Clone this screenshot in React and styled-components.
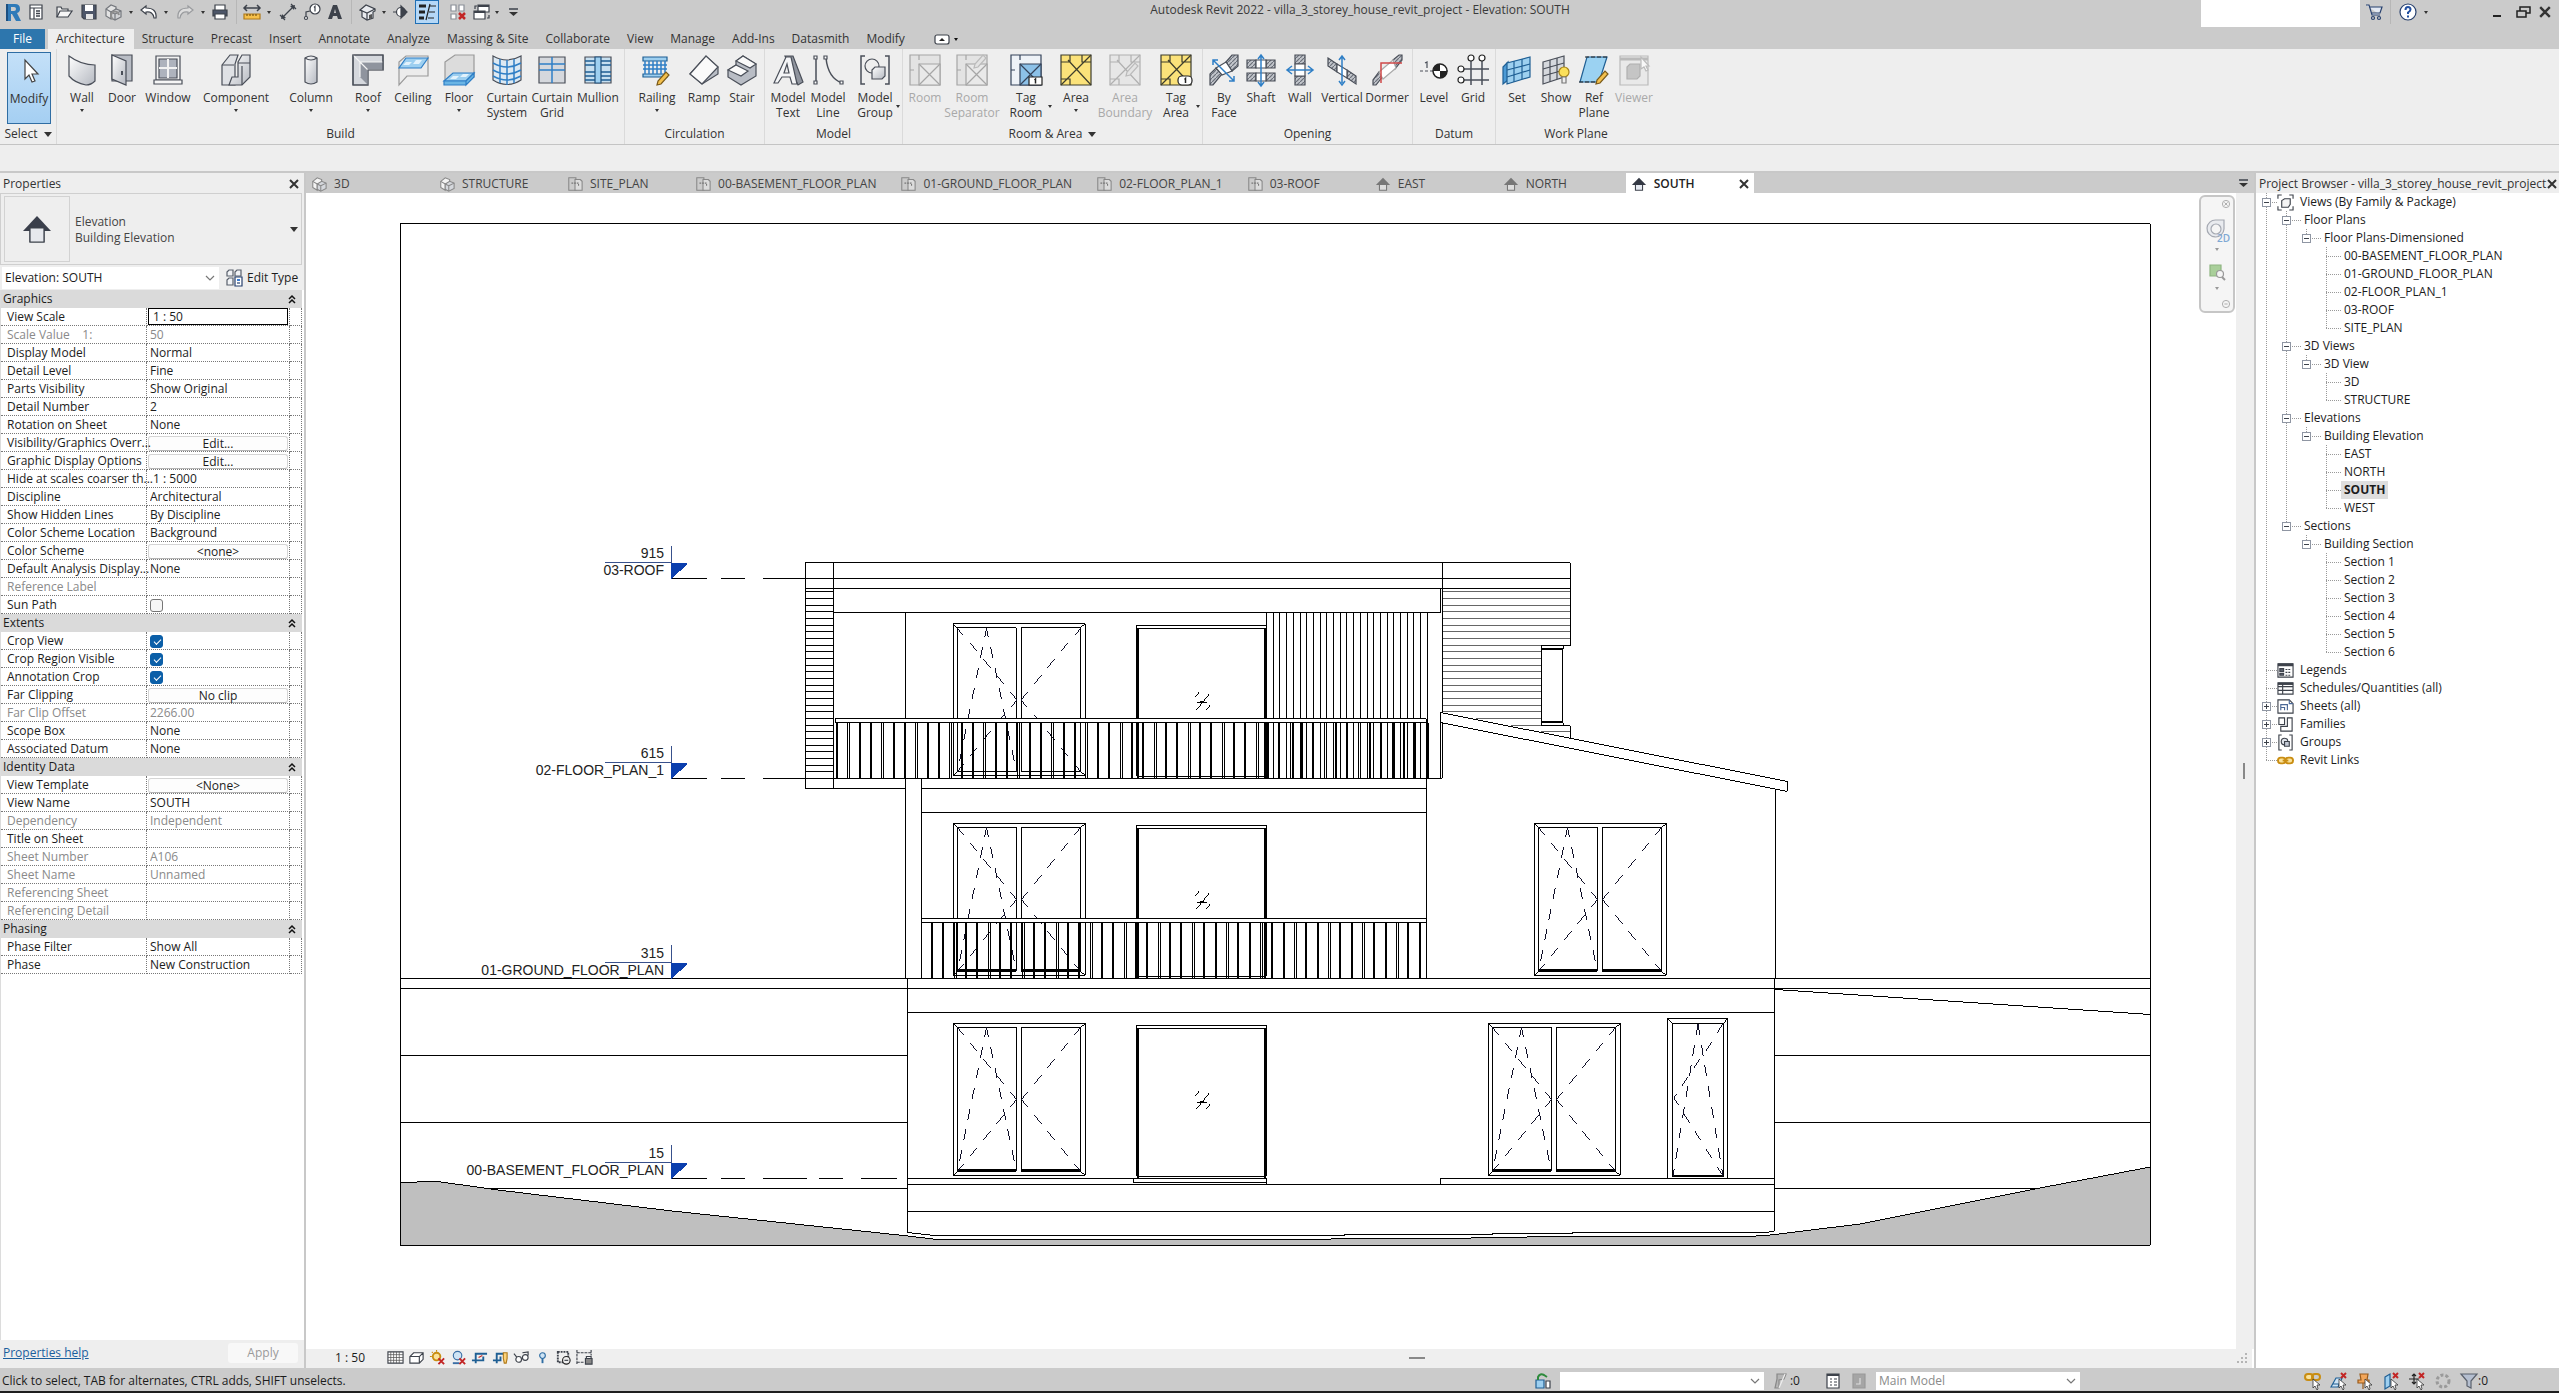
import styled, { createGlobalStyle } from "styled-components"

const GlobalStyle = createGlobalStyle`
    * {
        box-sizing: border-box;
    }
    body {
        margin: 0;
        background: #cbcbcb;
        color: #1c1c1c;
        font-family: "Open Sans", "Noto Sans", sans-serif;
        font-size: 12px;
        line-height: 16px;
    }
    button, input, select {
        font: inherit;
        color: inherit;
        margin: 0;
        padding: 0;
        border: 0;
        border-radius: 0;
        background: none;
    }
    svg {
        display: block;
        flex-shrink: 0;
        overflow: visible;
    }
`

const Page = styled.div`
    display: flex;
    flex-direction: column;
    height: 100vh;
    min-height: 1100px;
    border-bottom: 2px solid #1e1e1e;
`

/* title bar */
const TitleBar = styled.header`
    display: flex;
    align-items: center;
    height: 29px;
    background: #cbcbcb;
`
const QuickAccess = styled.div`
    display: flex;
    height: 24px;
    align-self: flex-start;
`
const ToolSlot = styled.button`
    display: flex;
    align-items: center;
    justify-content: center;
    flex: 0 0 ${({ $w }) => $w}px;
    width: ${({ $w }) => $w}px;
    height: 24px;
    background: ${({ $active }) => ($active ? "#b5d8f7" : "none")};
    box-shadow: ${({ $active }) => ($active ? "inset 0 0 0 1px #1f6fb5" : "none")};
    opacity: ${({ $dim }) => ($dim ? 0.35 : 1)};
`
const Separator = styled.span`
    flex: 0 0 1px;
    height: 24px;
    background: #b7b7b7;
`
const WindowTitle = styled.h1`
    flex: 1;
    margin: 0;
    padding-bottom: 9px;
    font-size: 12px;
    font-weight: 400;
    text-align: center;
    color: #3a3a3a;
`
const SearchBox = styled.input`
    align-self: flex-start;
    width: 159px;
    height: 27px;
    background: #fff;
`
const WindowTools = styled.div`
    display: flex;
    align-self: flex-start;
    height: 24px;
`

/* ribbon */
const RibbonTabs = styled.nav`
    display: flex;
    align-items: stretch;
    height: 20px;
    background: #cbcbcb;
`
const RibbonTab = styled.button`
    padding: 0 9px 0 8px;
    line-height: 20px;
    color: #333;
    background: ${({ $active }) => ($active ? "#eeeeee" : "none")};
    white-space: nowrap;
`
const FileTab = styled(RibbonTab)`
    width: 45px;
    margin-right: 3px;
    padding: 0;
    background: #2d76ad;
    color: #fff;
`
const MinimizeRibbon = styled.button`
    display: flex;
    align-items: center;
    gap: 4px;
    margin-left: 20px;
`
const Ribbon = styled.div`
    display: flex;
    height: 96px;
    background: #eeeeee;
    border-bottom: 1px solid #c4c4c4;
`
const Panel = styled.section`
    display: flex;
    flex-direction: column;
    border-right: 1px solid ${({ $open }) => ($open ? "transparent" : "#dadada")};
`
const PanelTools = styled.div`
    display: flex;
    height: 76px;
    padding: 0 ${({ $right }) => $right || 0}px 0 ${({ $left }) => $left || 0}px;
`
const PanelLabel = styled.div`
    display: flex;
    align-items: center;
    justify-content: center;
    gap: 6px;
    height: 18px;
    color: #333;
`
const RibbonButton = styled.button`
    position: relative;
    display: flex;
    flex-direction: column;
    align-items: center;
    justify-content: flex-start;
    gap: 4px;
    width: ${({ $w }) => $w}px;
    padding-top: 5px;
    color: ${({ disabled }) => (disabled ? "#a9a9a9" : "#333")};
    svg {
        opacity: ${({ disabled }) => (disabled ? 0.6 : 1)};
    }
`
const ButtonLabel = styled.span`
    line-height: 15px;
    text-align: center;
    white-space: pre;
`
const ModifyButton = styled(RibbonButton)`
    width: 44px;
    height: 72px;
    margin: 3px 5px 0 7px;
    padding-top: 2px;
    background: linear-gradient(#c4e0f8, #a5cff2);
    border: 1px solid #2f6da3;
`
const Caret = styled.span`
    width: 0;
    height: 0;
    border: ${({ $size }) => $size || 2}px solid transparent;
    border-top: ${({ $size }) => ($size || 2) + 1}px solid ${({ $color }) => $color || "#333"};
    border-bottom: 0;
`
const SideCaret = styled(Caret)`
    position: absolute;
    right: 1px;
    top: 56px;
`
const OptionsBar = styled.div`
    height: 28px;
    background: #eeeeee;
    border-bottom: 2px solid #c8c8c8;
`

/* workspace */
const Workspace = styled.div`
    display: flex;
    flex: 1;
    min-height: 0;
`
const Sidebar = styled.aside`
    display: flex;
    flex-direction: column;
    flex: 0 0 306px;
    background: #eeeeee;
    border-right: 2px solid #c8c8c8;
`
const PanelTitle = styled.div`
    display: flex;
    align-items: center;
    justify-content: space-between;
    height: 20px;
    padding: 2px ${({ $right }) => $right}px 0 3px;
    background: #eeeeee;
    color: #333;
    white-space: nowrap;
`
const TypeBox = styled.div`
    display: flex;
    align-items: center;
    height: 72px;
    margin-right: 2px;
    padding: 2px 3px;
    border: 1px solid #cfcfcf;
`
const TypePreview = styled.div`
    display: flex;
    align-items: center;
    justify-content: center;
    width: 66px;
    height: 66px;
    border: 1px solid #d2d2d2;
`
const TypeName = styled.div`
    flex: 1;
    padding: 2px 0 0 5px;
    color: #444;
`
const TypeRow = styled.div`
    display: flex;
    align-items: center;
    height: 25px;
    padding: 2px 2px 1px;
    gap: 6px;
`
const SelectWrap = styled.div`
    display: flex;
    align-items: center;
    width: ${({ $w }) => $w}px;
    height: ${({ $h }) => $h}px;
    padding-right: 4px;
    background: #fff;
`
const Select = styled.select`
    flex: 1;
    min-width: 0;
    height: 100%;
    padding-left: 3px;
    appearance: none;
    color: ${({ $muted }) => ($muted ? "#8a8a8a" : "#1c1c1c")};
    opacity: 1;
`
const EditType = styled.button`
    display: flex;
    align-items: center;
    gap: 4px;
    white-space: nowrap;
`
const GridScroll = styled.div`
    flex: 1;
    min-height: 0;
    padding: 0 2px 0 0;
    background: #fff;
    border-left: 1px solid #dcdcdc;
`
const PropertyTable = styled.table`
    width: 301px;
    table-layout: fixed;
    border-collapse: separate;
    border-spacing: 0;
`
const GroupCell = styled.th`
    height: 18px;
    padding: 0 6px 0 2px;
    background: #dadada;
    font-weight: 400;
    line-height: 18px;
    text-align: left;
`
const GroupHead = styled.span`
    display: flex;
    align-items: center;
    justify-content: space-between;
`
const NameCell = styled.th`
    height: 18px;
    padding: 0 0 0 6px;
    border-right: 1px dotted #777;
    border-bottom: 1px dotted #777;
    font-weight: 400;
    line-height: 16px;
    text-align: left;
    white-space: pre;
    color: ${({ $muted }) => ($muted ? "#8a8a8a" : "#1c1c1c")};
`
const ValueCell = styled.td`
    height: 18px;
    padding: 0 1px;
    border-right: 1px dotted #777;
    border-bottom: 1px dotted #777;
    line-height: 16px;
`
const ValueInput = styled.input`
    display: block;
    width: 100%;
    height: 17px;
    padding: 0 0 1px ${({ $focus }) => ($focus ? 4 : 2)}px;
    border: ${({ $focus }) => ($focus ? "1px solid #000" : "0")};
    color: ${({ disabled }) => (disabled ? "#8a8a8a" : "#1c1c1c")};
`
const ValueButton = styled.button`
    display: block;
    width: 100%;
    height: 15px;
    margin-top: 2px;
    line-height: 13px;
    text-align: center;
    background: #fdfdfd;
    border: 1px solid #d5d5d5;
    border-bottom-color: #b5b5b5;
    border-radius: 3px;
`
const CheckBox = styled.input`
    display: block;
    appearance: none;
    width: 13px;
    height: 13px;
    margin: 2px 0 0 2px;
    border: 1px solid #767676;
    border-radius: 3px;
    background: #f6f6f6;
    &:checked {
        border-color: #0b5fa8;
        background: #0b5fa8;
    }
    &:checked::after {
        content: "";
        display: block;
        width: 6px;
        height: 3px;
        margin: 3px 0 0 3px;
        border: solid #fff;
        border-width: 0 0 1px 1px;
        transform: rotate(-45deg);
    }
`
const SidebarFooter = styled.div`
    display: flex;
    align-items: center;
    justify-content: space-between;
    height: 28px;
    padding: 0 6px 2px 3px;
`
const HelpLink = styled.a`
    color: #1c5f9e;
    text-decoration: underline;
`
const ApplyButton = styled.button`
    width: 70px;
    height: 20px;
    background: #f8f8f8;
    border-radius: 3px;
    color: #9a9a9a;
`

/* view area */
const ViewArea = styled.main`
    display: flex;
    flex-direction: column;
    flex: 1;
    min-width: 0;
`
const DocTabs = styled.div`
    display: flex;
    height: 20px;
    background: #cbcbcb;
`
const DocTab = styled.button`
    display: flex;
    align-items: center;
    min-width: 128px;
    padding: 2px ${({ $active }) => ($active ? 5 : 19)}px 0 5px;
    gap: 7px;
    background: ${({ $active }) => ($active ? "#fff" : "none")};
    color: ${({ $active }) => ($active ? "#222" : "#444")};
    font-weight: ${({ $active }) => ($active ? 600 : 400)};
    white-space: nowrap;
`
const TabClose = styled.span`
    margin-left: auto;
`
const TabMenu = styled.button`
    display: flex;
    align-items: center;
    margin-left: auto;
    padding-right: 2px;
`
const CanvasRow = styled.div`
    position: relative;
    display: flex;
    flex: 1;
    min-height: 0;
    background: #fff;
`
const Drawing = styled.svg`
    flex: 1;
    min-width: 0;
    height: 100%;
`
const ScrollTrack = styled.div`
    display: flex;
    align-items: center;
    justify-content: center;
    flex: 0 0 18px;
    background: #efefef;
`
const NavBar = styled.div`
    position: absolute;
    top: 2px;
    right: 19px;
    display: flex;
    flex-direction: column;
    align-items: center;
    width: 36px;
    height: 118px;
    padding: 3px;
    background: #f5f5f5;
    border: 2px solid #c6c6c6;
    border-radius: 6px;
`
const NavTool = styled.button`
    display: flex;
    flex-direction: column;
    align-items: center;
    gap: 6px;
    margin-top: ${({ $top }) => $top}px;
`
const NavCorner = styled.button`
    align-self: flex-end;
    margin-top: ${({ $top }) => $top || 0}px;
`
const NavRule = styled.span`
    width: 26px;
    height: 1px;
    margin-top: 4px;
    background: #c6c6c6;
`
const ViewControls = styled.div`
    display: flex;
    align-items: center;
    flex: 0 0 19px;
    padding: 0 4px 2px 29px;
    background: #efefef;
    border-right: 2px solid #fff;
`
const ScaleLabel = styled.button`
    width: 50px;
    text-align: left;
`
const ControlSlot = styled.button`
    display: flex;
    justify-content: center;
    width: 21px;
`
const HorizontalThumb = styled.span`
    width: 16px;
    height: 2px;
    margin: 0 auto;
    background: #888;
`

/* project browser */
const Browser = styled.aside`
    display: flex;
    flex-direction: column;
    flex: 0 0 305px;
    background: #fff;
    border-left: 2px solid #c8c8c8;
`
const Tree = styled.ul`
    margin: 0;
    padding: 0 0 0 1px;
    list-style: none;
`
const TreeRow = styled.li`
    display: flex;
    align-items: center;
    height: 18px;
    white-space: nowrap;
`
const Guide = styled.span`
    display: flex;
    align-items: center;
    flex: 0 0 ${({ $w }) => $w || 20}px;
    height: 18px;
    padding-left: 5px;
    background:
        repeating-linear-gradient(#999 0 1px, transparent 1px 2px) 9px 0 / 1px ${({ $down }) => $down} no-repeat,
        repeating-linear-gradient(90deg, #999 0 1px, transparent 1px 2px) 9px 9px / ${({ $across }) => ($across ? "100%" : "0")} 1px no-repeat;
`
const Expander = styled.button`
    display: flex;
    align-items: center;
    justify-content: center;
    width: 9px;
    height: 9px;
    background: #fff;
    border: 1px solid #8f96a3;
`
const TreeLabel = styled.span`
    margin-left: ${({ $root }) => ($root ? 3 : 0)}px;
    padding: 0 3px;
    line-height: 18px;
    font-weight: ${({ $active }) => ($active ? 700 : 400)};
    background: ${({ $active }) => ($active ? "#dedede" : "none")};
`

/* status bar */
const StatusBar = styled.footer`
    display: flex;
    align-items: center;
    flex: 0 0 23px;
    padding: 2px 71px 0 2px;
    background: #cbcbcb;
`
const Hint = styled.span`
    flex: 1;
`
const StatusGroup = styled.div`
    display: flex;
    align-items: center;
    gap: 8px;
    margin-right: ${({ $after }) => $after || 0}px;
`
const Counter = styled.span`
    display: flex;
    align-items: center;
`

/* ---------- small icons ---------- */
const Icon = ({ size = 18, box = 18, children }) => (
    <svg width={size} height={size} viewBox={`0 0 ${box} ${box}`} fill="none" stroke="#3d424b" strokeWidth="1.2" aria-hidden="true">
        {children}
    </svg>
)
const Cross = ({ size = 10, color = "#333", width = 2 }) => (
    <Icon size={size} box={10}><path d="M1 1l8 8M9 1l-8 8" stroke={color} strokeWidth={width} /></Icon>
)
const Chevron = () => <Icon size={10} box={10}><path d="M1 3l4 4 4-4" stroke="#777" /></Icon>

const CubeShape = ({ stroke = "#3d424b" }) => (
    <>
        <path d="M2 6l5-4 5 2v3l-5 3v6l-5-3z" fill="#f4f4f4" stroke={stroke} />
        <path d="M7 9l5-3 5 2v6l-6 3-4-2z" fill="#d5d8dd" stroke={stroke} />
        <path d="M2 6l5 3 4 2v6M11 11l6-3" stroke={stroke} />
    </>
)

const small = {
    logo: (
        <>
            <path d="M2 1h9q5 0 5 5 0 3-3 4l4 8h-5l-4-7H7v7H2z" fill="#2f7ab8" stroke="none" />
            <path d="M7 4h3q2 0 2 2t-2 2H7z" fill="#cbcbcb" stroke="none" />
            <path d="M2 1h2v17H2z" fill="#1c4f80" stroke="none" />
        </>
    ),
    menu: <><path d="M3 2h12v14H3zM3 5h12M7 5v11" fill="#fff" /><path d="M9 8h4M9 10.500h4M9 13h4" strokeWidth="1.500" /></>,
    open: <><path d="M2 14V4h4l1 2h6v2" fill="#eee" /><path d="M2 14l3-6h12l-4 6z" fill="#f6f6f6" /></>,
    save: <><path d="M2 2h14v14H4l-2-2z" fill="#4d5669" /><path d="M5 2h8v6H5z" fill="#fff" stroke="none" /><path d="M6 11h7v5H6z" fill="#e5e5e5" stroke="none" /></>,
    sync: <g opacity=".6"><CubeShape /><path d="M9 16a4 4 0 1 1 6-4" stroke="#666" strokeWidth="2" /></g>,
    undo: <path d="M6 3L1 7l5 4V9q7-1 8 6h2Q17 5 6 5z" fill="#fff" />,
    redo: <path d="M12 3l5 4-5 4V9q-7-1-8 6H2Q1 5 12 5z" fill="#fff" />,
    print: <><path d="M4 7V2h10v5" fill="#fff" /><path d="M2 7h14v6H2z" fill="#4d5669" /><path d="M4 11h10v5H4z" fill="#fff" /></>,
    measure: <><path d="M1 5h16M4 2L1 5l3 3M14 2l3 3-3 3" strokeWidth="1.500" /><path d="M1 11h16v5H1z" fill="#f6c04a" stroke="#b07a1a" /><path d="M4 11v2M7 11v2M10 11v2M13 11v2" stroke="#7a5410" /></>,
    dimension: <><path d="M4 14L14 4" /><path d="M2 16l1-5 4 4zM16 2l-1 5-4-4z" fill="#3d424b" stroke="none" /><path d="M1 12l5 5M12 1l5 5" /></>,
    tag: <><circle cx="12" cy="6" r="5" fill="#fff" /><path d="M11 4.500l1-1v5M7 8l-4 1v5" /><circle cx="3" cy="15" r="1.500" fill="#fff" /></>,
    textA: <path d="M2 16L7 2h4l5 14h-4l-1-3H7l-1 3zM8 10h2L9 6z" fill="#3d424b" stroke="none" />,
    home: <><path d="M2 7l6-5 9 4v2l-2 1v6l-6 2-5-3V8z" fill="#e9ebef" /><path d="M2 7l7 3 8-4M9 10v7" /><path d="M11 16v-4l3-1v4z" fill="#555" stroke="none" /></>,
    section: <><circle cx="9" cy="9" r="4.500" fill="#fff" /><path d="M9 3l6 6-6 6zM1 9h3" fill="#3d424b" /></>,
    thin: <><path d="M1 3h7M1 9h6M1 15h5" stroke="#222" strokeWidth="3" /><path d="M12 3h6M11 9h6M10 15h6M12 1L8 17" stroke="#222" /></>,
    closeHidden: <><path d="M2 2h5v6H2zM10 2h5v6h-5zM2 11h5v5H2z" fill="#fff" stroke="#8a8f98" /><path d="M10 10l6 6M16 10l-6 6" stroke="#c22525" strokeWidth="2.500" /></>,
    switchWin: <><path d="M5 2h11v7H5z" fill="#fff" /><path d="M5 3h11" strokeWidth="2" /><path d="M1 8h11v8H1z" fill="#fff" /><path d="M1 9h11" strokeWidth="2" /><path d="M2 6V3h2M16 12v3h-2" /></>,
    custom: <><path d="M5 6h9" strokeWidth="1.500" /><path d="M5 9h9l-4.500 4z" fill="#333" stroke="none" /></>,
    cart: <><path d="M1 2h3l3 10h8M4 4h13l-2 6H6" stroke="#27406e" fill="#e3e9f3" /><circle cx="8" cy="15" r="1.500" stroke="#27406e" /><circle cx="14" cy="15" r="1.500" stroke="#27406e" /></>,
    help: <><circle cx="9" cy="9" r="8" fill="#fff" stroke="#27406e" /><path d="M6.500 7q0-3 2.500-3t2.500 2.500Q11.500 8 9 9.500V11M9 12.500v2" stroke="#2350a0" strokeWidth="2" /></>,
    minimize: <path d="M5 13h8" stroke="#222" strokeWidth="2" />,
    restore: <><path d="M6 8V4h10v6h-4" stroke="#222" strokeWidth="1.500" /><path d="M3 8h9v6H3z" stroke="#222" strokeWidth="1.500" /></>,
    cube: <CubeShape stroke="#888" />,
    plan: <><path d="M2 2h8v14H2z" stroke="#888" /><path d="M9 8V4h6l2 2v10H9z" fill="#dcdcdc" stroke="#888" /><path d="M5 8h8v4" strokeDasharray="2 1" stroke="#777" /></>,
    elevation: <><path d="M5 9h8v7H5z" fill="#ddd" stroke="#777" /><path d="M9 2l8 8H1z" fill="#777" stroke="none" /></>,
    elevationActive: <><path d="M5 9h8v7H5z" fill="#e6eaf2" /><path d="M9 2l8 8H1z" fill="#343944" stroke="none" /></>,
    editType: <><path d="M2 3l2-2h4v6H2zM10 3l2-2h4v6h-6zM2 11l2-2h4v7H2z" fill="#f1f3f6" stroke="#59606c" /><path d="M10 8h7v9h-7z" fill="#fff" stroke="#27406e" /><path d="M12 10h3v2h-3z" fill="#3a7bd0" stroke="none" /><path d="M12 14h3" stroke="#27406e" /></>,
}

/* ---------- ribbon icons, on a 32px box ---------- */
const ln = "#4a4f59"
const blue = "#2f7fc6"
const Pencil = ({ x = 0, y = 0, grey }) => (
    <path d={`M${x} ${y + 12}l1-4 8-9 3 3-8 9z`} fill={grey ? "#ddd" : "#f3c04d"} stroke={grey ? "#999" : "#7a5a1a"} />
)
const AreaSquare = ({ fill, stroke = "#3d3d2d" }) => (
    <>
        <path d="M1 1h30v30H1z" fill={fill} stroke={stroke} />
        <path d="M1 8h9M10 1v7M1 31L31 1M8 6l23 25M10 31v-6h-9M22 1v7h9" stroke={stroke} />
    </>
)
const RoomShape = ({ fill = "#dcdcdc", inner = "#e6e6e6", stroke = "#777" }) => (
    <>
        <path d="M1 1h30v30H1z" fill={fill} stroke={stroke} />
        <path d="M10 10h21v21H10z" fill={inner} stroke={stroke} />
        <path d="M10 10l21 21M31 10L10 31M10 1v5M1 16h4" stroke={stroke} />
    </>
)
const Hatch = ({ d }) => <path d={d} fill="url(#hatch)" stroke={ln} />
const large = {
    modify: <path d="M12 5v19l4-4 3 7 3-1-3-7h6z" fill="#fff" stroke="#444" />,
    wall: <path d="M3 2q12 9 26 9v16q-4 4-9 4Q9 29 3 22z" fill="url(#metal)" stroke={ln} />,
    door: <><path d="M6 1h20v26H6z" fill="#b9bdc5" stroke={ln} /><path d="M6 1l14 6v24L6 25z" fill="url(#metal)" stroke={ln} /><path d="M16 17v4" stroke={ln} strokeWidth="2" /></>,
    window: <><path d="M4 2h24v24H4z" fill="#f2f2f2" stroke={ln} /><path d="M7 5h18v19H7z" fill="#aeb3bd" stroke={ln} /><path d="M16 5v19M7 14h18" stroke="#f2f2f2" strokeWidth="2" /><path d="M2 26h28v4H2z" fill="#f6f6f6" stroke={ln} /></>,
    component: <><path d="M2 11L10 1h8l-3 9v21H2z" fill="#dfe1e5" stroke={ln} /><path d="M18 8l4-7h8v22l-8 8H9l3-8h6z" fill="url(#metal)" stroke={ln} /><path d="M2 11h12M18 9h12M22 31V12" stroke={ln} /></>,
    column: <><path d="M10 4q6-4 12 0v24q-6 4-12 0z" fill="url(#metal)" stroke={ln} /><path d="M10 4q6 4 12 0" stroke={ln} /></>,
    roof: <><path d="M1 1h30v15H16v15H1z" fill="#d5d8dd" stroke={ln} /><path d="M8 8h23v8H16v15l-8-8z" fill="#8f949e" stroke="none" /><path d="M1 1l7 7h23M8 8v15M16 16h15M16 31V16L8 8" stroke="#f4f4f4" /><path d="M1 1h30v15H16v15H1z" stroke={ln} /></>,
    ceiling: <><path d="M2 8L9 2h22v20H10l-8 9z" fill="#ececec" stroke="#9a9a9a" /><path d="M9 4h22l-7 10H2z" fill="#9dcff0" stroke={blue} /><path d="M9 8h6l-3 3H6zM19 6h6l-3 4h-6z" fill="#e2f2fc" stroke="none" /></>,
    floor: <><path d="M2 8l10-7h19v22H12L2 30z" fill="#dcdcdc" stroke="#9a9a9a" /><path d="M10 19h21l-8 8H1z" fill="#9dcff0" stroke={blue} /><path d="M1 27h22v4H1zM23 27l8-8v4l-8 8z" fill="#69b4e4" stroke={blue} /><path d="M10 22h6l-3 3H7zM20 20h6l-3 3h-6z" fill="#e2f2fc" stroke="none" /></>,
    curtainSystem: <><path d="M2 2q14 8 28 0v24q-14 9-28 0z" fill="#dce9f3" stroke={ln} /><path d="M2 9q14 8 28 0M2 16q14 8 28 0M2 22q14 8 28 0M9 5v24M16 6v25M23 5v24" stroke={blue} strokeWidth="1.500" /></>,
    curtainGrid: <><path d="M3 3h26v26H3z" fill="#d5d8dd" stroke={ln} /><path d="M16 3v26M3 16h26M3 10h26" stroke={blue} strokeWidth="1.500" /></>,
    mullion: <><path d="M3 3h26v26H3z" fill="#c6dff0" stroke={ln} /><path d="M3 7h26M3 11h26M3 18h26M3 22h26M3 26h26" stroke="#1f5f94" strokeWidth="1.500" /><path d="M13 3h6v26h-6z" fill="#9dcff0" stroke="#1f4f7a" /></>,
    railing: <><path d="M2 3h24v4H2zM2 20h24v3H2z" fill="#9dcff0" stroke="#1f5f94" /><path d="M4 7v13M8 7v13M12 7v13M16 7v13M20 7v13M24 7v13M2 11h24M2 15h24" stroke={blue} strokeWidth="1.500" /><Pencil x={16} y={19} /></>,
    ramp: <><path d="M2 20L18 2l12 11v7L14 30z" fill="#b9bdc5" stroke={ln} /><path d="M2 20L18 2l12 11-16 17z" fill="#fafafa" stroke={ln} /></>,
    stair: <><path d="M2 16l8-5V7l7-5 13 8v12L15 31l-13-8z" fill="#b9bdc5" stroke={ln} /><path d="M10 7l7-5 13 8-6 4zM2 16l8-5 12 6-7 5z" fill="#fafafa" stroke={ln} /></>,
    modelText: <><path d="M13 2h8l10 26-5 3z" fill="#8f949e" stroke={ln} /><path d="M2 29L14 3h5l6 27h-5l-2-7h-8l-4 6zM12 19h5l-2-9z" fill="#f4f5f7" stroke={ln} /></>,
    modelLine: <><path d="M4 4v24M14 4q2 20 16 25" stroke={ln} strokeWidth="1.500" /><path d="M2 2h3v3H2zM2 27h3v3H2zM12 2h3v3h-3zM28 27h3v3h-3z" fill="#fff" stroke={ln} /></>,
    modelGroup: <><path d="M6 2H2v28h4M26 2h4v28h-4" stroke={ln} strokeWidth="1.500" /><circle cx="13" cy="12" r="7" fill="#eee" stroke={ln} /><path d="M13 16l3-3h10v9l-3 3H13z" fill="url(#metal)" stroke={ln} /></>,
    room: <RoomShape />,
    roomSep: <><RoomShape /><Pencil x={18} y={2} grey /></>,
    tagRoom: <><RoomShape fill="#eef2f7" inner="#8cc1e8" stroke="#34435a" /><path d="M19 23h13v8H19z" fill="#fff" stroke="#222" /><path d="M24.500 26l1-1v4.500" stroke="#222" strokeWidth="1.500" /></>,
    area: <AreaSquare fill="#fbe27a" />,
    areaBoundary: <><AreaSquare fill="#e2e2e2" stroke="#888" /><Pencil x={17} y={10} grey /></>,
    tagArea: <><AreaSquare fill="#fbe27a" /><rect x="18" y="22" width="14" height="9" rx="4" fill="#fff" stroke="#222" /><path d="M24.500 25.500l1-1v4.500" stroke="#222" strokeWidth="1.500" /></>,
    byFace: <><Hatch d="M18 8l6-7h6v11l-6 5zM2 31V20l6-6 6 6-9 11z" /><path d="M8 14l10-6 6 9-10 4z" fill="#fff" stroke={ln} /><path d="M5 6l21 21M5 11V6h5M26 22v5h-5" stroke={blue} strokeWidth="1.500" /></>,
    shaft: <><Hatch d="M2 6h9v8H2zM21 6h9v8h-9zM2 19h9v8H2zM21 19h9v8h-9z" /><path d="M11 6h10v8H11zM11 19h10v8H11z" fill="#fff" stroke={ln} /><path d="M16 2v29M13 5l3-4 3 4M13 28l3 4 3-4" stroke={blue} strokeWidth="1.500" /></>,
    wallOpening: <><Hatch d="M11 1h10v9H11zM11 22h10v9H11z" /><path d="M11 10h10v12H11z" fill="#fff" stroke={ln} /><path d="M4 16h24M8 12l-5 4 5 4M24 12l5 4-5 4" stroke={blue} strokeWidth="1.500" /></>,
    vertical: <><Hatch d="M2 4l9 6v8l-9-6zM21 16l9 6v8l-9-6z" /><path d="M11 10l10 6v8l-10-6z" fill="#fff" stroke={ln} /><path d="M16 3v26M13 6l3-4 3 4M13 27l3 4 3-4" stroke={blue} strokeWidth="1.500" /></>,
    dormer: <><Hatch d="M22 6l6-5h3v5l-7 9zM2 31v-5l6-8 4 4-7 9z" /><path d="M8 18L22 6l3 8-13 11z" fill="#fff" stroke="#aaa" /><path d="M10 29V9h21" stroke="#d04a4a" strokeWidth="1.500" /></>,
    level: <><path d="M2 17h30" stroke={ln} strokeDasharray="3 2" /><path d="M7 9l2-1v6" stroke={ln} /><circle cx="22" cy="17" r="7" fill="#fff" stroke="#222" strokeWidth="1.500" /><path d="M22 10a7 7 0 0 0-7 7h7zM22 24a7 7 0 0 0 7-7h-7z" fill="#222" stroke="none" /></>,
    grid: <><path d="M14 7v24M25 7v24M7 15h25M7 26h25" stroke={ln} strokeWidth="1.500" /><circle cx="14" cy="4" r="3" fill="#fff" stroke="#222" /><circle cx="25" cy="4" r="3" fill="#fff" stroke="#222" /><circle cx="4" cy="15" r="3" fill="#fff" stroke="#222" /><circle cx="4" cy="26" r="3" fill="#fff" stroke="#222" /></>,
    set: <><path d="M2 13l5-5v18l-5 4z" fill="#4d9bd6" stroke="#1f5f94" /><path d="M6 9l23-6v20L6 30z" fill="#9dd0f0" stroke="#1f5f94" /><path d="M6 16l23-6M6 23l23-7M13 7v21M21 5v20" stroke="#1f5f94" /></>,
    show: <><path d="M3 8l21-6v21L3 30z" fill="#d5d8dd" stroke={ln} /><path d="M3 15l21-6M3 22l21-6M10 6v22M17 4v21" stroke={ln} /><circle cx="24" cy="18" r="5" fill="#fbe05a" stroke="#a5831a" /><path d="M22 23h4v6h-4z" fill="#eee" stroke="#777" /></>,
    refPlane: <><path d="M9 3h20l-8 25H2z" fill="#9bd2f2" stroke="#1f5f94" /><path d="M7 3h24M1 28h20" stroke="#222" strokeDasharray="4 2" /><Pencil x={18} y={18} /></>,
    viewer: <><path d="M2 2h28v29H2z" fill="#e6e6e6" stroke="#999" /><path d="M2 5h28" stroke="#999" strokeWidth="3" /><path d="M9 13l3-3h10v12l-3 3H9z" fill="#aaa" stroke="#888" /><path d="M23 3v12l3-2 2 4 2-1-2-4h3z" fill="#fff" stroke="#999" /></>,
}

const quickTools = [
    { icon: "logo", w: 25, label: "Revit" },
    { icon: "menu", w: 22, label: "Home" },
    { icon: "open", w: 34, label: "Open" },
    { icon: "save", w: 16, label: "Save" },
    { icon: "sync", w: 31, label: "Synchronize" },
    { caret: true, w: 6, label: "Synchronize options" },
    { icon: "undo", w: 30, label: "Undo" },
    { caret: true, w: 4, label: "Undo list" },
    { icon: "redo", w: 33, label: "Redo", dim: true },
    { caret: true, w: 3, label: "Redo list" },
    { icon: "print", w: 32, label: "Print" },
    { sep: true },
    { icon: "measure", w: 30, label: "Measure" },
    { caret: true, w: 4, label: "Measure options" },
    { icon: "dimension", w: 34, label: "Aligned dimension" },
    { icon: "tag", w: 14, label: "Tag by category" },
    { icon: "textA", w: 32, label: "Text" },
    { sep: true },
    { icon: "home", w: 29, label: "Default 3D view" },
    { caret: true, w: 6, label: "3D view options" },
    { icon: "section", w: 28, label: "Section" },
    { icon: "thin", w: 24, label: "Thin lines", active: true },
    { icon: "closeHidden", w: 38, label: "Close inactive views" },
    { icon: "switchWin", w: 10, label: "Switch windows" },
    { caret: true, w: 20, label: "Switch windows list" },
    { icon: "custom", w: 12, label: "Customize" },
]

const ribbonTabs = ["Architecture", "Structure", "Precast", "Insert", "Annotate", "Analyze", "Massing & Site", "Collaborate", "View", "Manage", "Add-Ins", "Datasmith", "Modify"]

const panels = [
    {
        title: "Build", left: 4, right: 1,
        tools: [
            ["wall", "Wall", 42, "down"], ["door", "Door", 38], ["window", "Window", 54], ["component", "Component", 82, "down"],
            ["column", "Column", 68, "down"], ["roof", "Roof", 46, "down"], ["ceiling", "Ceiling", 44], ["floor", "Floor", 48, "down"],
            ["curtainSystem", "Curtain\nSystem", 48], ["curtainGrid", "Curtain\nGrid", 42], ["mullion", "Mullion", 50],
        ],
    },
    {
        title: "Circulation", left: 7, right: 6,
        tools: [["railing", "Railing", 50, "down"], ["ramp", "Ramp", 44], ["stair", "Stair", 32]],
    },
    {
        title: "Model", left: 4, right: 1,
        tools: [["modelText", "Model\nText", 38], ["modelLine", "Model\nLine", 42], ["modelGroup", "Model\nGroup", 52, "side"]],
    },
    {
        title: "Room & Area", left: 2, right: 1, more: true,
        tools: [
            ["room", "Room", 40, "", true], ["roomSep", "Room\nSeparator", 54, "", true], ["tagRoom", "Tag\nRoom", 54, "side"],
            ["area", "Area", 46, "down"], ["areaBoundary", "Area\nBoundary", 52, "", true], ["tagArea", "Tag\nArea", 50, "side"],
        ],
    },
    {
        title: "Opening", left: 4, right: 3,
        tools: [["byFace", "By\nFace", 34], ["shaft", "Shaft", 40], ["wallOpening", "Wall", 38], ["vertical", "Vertical", 46], ["dormer", "Dormer", 44]],
    },
    { title: "Datum", left: 2, right: 2, tools: [["level", "Level", 38], ["grid", "Grid", 40]] },
    {
        title: "Work Plane", left: 2, open: true,
        tools: [["set", "Set", 38], ["show", "Show", 40], ["refPlane", "Ref\nPlane", 36], ["viewer", "Viewer", 44, "", true]],
    },
]

const properties = [
    {
        group: "Graphics",
        rows: [
            ["View Scale", "1 : 50", "focus"], ["Scale Value    1:", "50", "muted"], ["Display Model", "Normal"], ["Detail Level", "Fine"],
            ["Parts Visibility", "Show Original"], ["Detail Number", "2"], ["Rotation on Sheet", "None"],
            ["Visibility/Graphics Overr...", "Edit...", "button"], ["Graphic Display Options", "Edit...", "button"],
            ["Hide at scales coarser th...", " 1 : 5000"], ["Discipline", "Architectural"], ["Show Hidden Lines", "By Discipline"],
            ["Color Scheme Location", "Background"], ["Color Scheme", "<none>", "button"], ["Default Analysis Display...", "None"],
            ["Reference Label", "", "muted"], ["Sun Path", false, "check"],
        ],
    },
    {
        group: "Extents",
        rows: [
            ["Crop View", true, "check"], ["Crop Region Visible", true, "check"], ["Annotation Crop", true, "check"],
            ["Far Clipping", "No clip", "button"], ["Far Clip Offset", "2266.00", "muted"], ["Scope Box", "None"], ["Associated Datum", "None"],
        ],
    },
    {
        group: "Identity Data",
        rows: [
            ["View Template", "<None>", "button"], ["View Name", "SOUTH"], ["Dependency", "Independent", "muted"], ["Title on Sheet", ""],
            ["Sheet Number", "A106", "muted"], ["Sheet Name", "Unnamed", "muted"], ["Referencing Sheet", "", "muted"], ["Referencing Detail", "", "muted"],
        ],
    },
    { group: "Phasing", rows: [["Phase Filter", "Show All"], ["Phase", "New Construction"]] },
]

const docTabs = [
    ["cube", "3D"], ["cube", "STRUCTURE"], ["plan", "SITE_PLAN"], ["plan", "00-BASEMENT_FLOOR_PLAN"], ["plan", "01-GROUND_FLOOR_PLAN"],
    ["plan", "02-FLOOR_PLAN_1"], ["plan", "03-ROOF"], ["elevation", "EAST"], ["elevation", "NORTH"], ["elevationActive", "SOUTH"],
]

const treeIcons = {
    views: <><path d="M5 1H1v4M13 1h4v4M5 17H1v-4M13 17h4v-4" /><path d="M5 7l3-2h6v6l-2 3H5z" fill="#f4f4f4" /></>,
    legends: <><path d="M1 2h16v14H1z" fill="#fff" /><path d="M1 3h16" strokeWidth="3" /><path d="M3 7h4v3H3zM3 12h4v2H3z" fill="#59606c" /><path d="M9 8h6M9 11h6M9 14h6" strokeDasharray="2 1" /></>,
    schedules: <><path d="M1 3h16v12H1zM1 7h16M1 11h16M6 3v12" fill="#fff" /><path d="M1 4h16" strokeWidth="2.500" /></>,
    sheets: <><path d="M1 2h12l4 4v10H1z" fill="#fff" /><path d="M4 13V7h7v6M4 10h4v3M13 2v4h4" stroke="#4a6796" /></>,
    families: <path d="M2 2h6v7H2zM11 2h5v14H4v-5h7z" fill="#fff" />,
    groups: <><path d="M5 1H2v16h3M13 1h3v16h-3" /><circle cx="8" cy="8" r="3.500" fill="#dfe3ea" /><path d="M8 8h5v5H8z" fill="#c4cad6" /></>,
    links: <g stroke="#c98d12" strokeWidth="2"><rect x="1" y="6" width="8" height="6" rx="3" fill="#fbe29a" /><rect x="9" y="6" width="8" height="6" rx="3" fill="#fbe29a" /><path d="M6 9h6" /></g>,
}

/* pipes: which outer guide lines run past the row */
const leafs = (names, pipe1) => names.map((name, i) => ({ depth: 3, label: name, pipes: [true, pipe1, false], last: i === names.length - 1 }))
const tree = [
    { depth: 0, label: "Views (By Family & Package)", box: "-", icon: "views" },
    { depth: 1, label: "Floor Plans", box: "-", pipes: [true] },
    { depth: 2, label: "Floor Plans-Dimensioned", box: "-", pipes: [true, true], last: true },
    ...leafs(["00-BASEMENT_FLOOR_PLAN", "01-GROUND_FLOOR_PLAN", "02-FLOOR_PLAN_1", "03-ROOF", "SITE_PLAN"], true),
    { depth: 1, label: "3D Views", box: "-", pipes: [true] },
    { depth: 2, label: "3D View", box: "-", pipes: [true, true], last: true },
    ...leafs(["3D", "STRUCTURE"], true),
    { depth: 1, label: "Elevations", box: "-", pipes: [true] },
    { depth: 2, label: "Building Elevation", box: "-", pipes: [true, true], last: true },
    ...leafs(["EAST", "NORTH", "SOUTH", "WEST"], true),
    { depth: 1, label: "Sections", box: "-", pipes: [true], last: true },
    { depth: 2, label: "Building Section", box: "-", pipes: [true, false], last: true },
    ...leafs(["Section 1", "Section 2", "Section 3", "Section 4", "Section 5", "Section 6"], false),
    { depth: 0, label: "Legends", icon: "legends" },
    { depth: 0, label: "Schedules/Quantities (all)", icon: "schedules" },
    { depth: 0, label: "Sheets (all)", box: "+", icon: "sheets" },
    { depth: 0, label: "Families", box: "+", icon: "families" },
    { depth: 0, label: "Groups", box: "+", icon: "groups" },
    { depth: 0, label: "Revit Links", icon: "links", last: true },
]

/* ---------- elevation drawing ---------- */
const range = (n) => Array.from({ length: n }, (_, i) => i)
const snap = (v) => Math.floor(v) + 0.5

function CasementWindow({ x, y, soft }) {
    const b = y + 152
    return (
        <g>
            <path d={`M${x} ${y}h132v152h-132z`} />
            <path d={`M${x + 4} ${y + 4}h59v144h-59zM${x + 68} ${y + 4}h59v144h-59z`} />
            {!soft && <path d={`M${x + 4} ${b - 5}h59M${x + 68} ${b - 5}h59`} strokeWidth="2" />}
            <path d={`M${x} ${y}l4 4M${x + 132} ${y}l-5 4M${x} ${b}l4-4M${x + 132} ${b}l-5-4`} />
            <g strokeDasharray="11 10" stroke="#101028" strokeDashoffset="1">
                <path d={`M${x + 33} ${y + 4}l-29 144`} />
                <path d={`M${x + 33} ${y + 4}l30 144`} />
                <path d={`M${x + 4} ${y + 4}l59 72`} />
                <path d={`M${x + 4} ${y + 148}l59-72`} />
                <path d={`M${x + 127} ${y + 4}l-59 72`} />
                <path d={`M${x + 127} ${y + 148}l-59-72`} />
            </g>
        </g>
    )
}

function SlidingDoor({ y }) {
    return (
        <g>
            <path d={`M1136.500 ${y + 151}V${y}h130v151M1136.500 ${y + 3}h130M1137 ${y + 151}h129`} />
            <path d={`M1138 ${y + 3}v150M1265 ${y + 3}v150`} strokeWidth="2" />
            <path d={`M1196 ${y + 84}l13-16M1197 ${y + 77}h10M1200 ${y + 76}h4M1195 ${y + 71}l4-5M1206 ${y + 84}l4-5`} />
        </g>
    )
}

/* every third baluster is a post drawn as two thin lines */
function Balusters({ from, count, top, bottom, post }) {
    return range(count).map((k) => {
        const x = Math.round(from + k * 11.34)
        return k % 3 === post
            ? <path key={k} d={`M${x - 0.5} ${top}V${bottom}M${x + 1.5} ${top}V${bottom}`} />
            : <path key={k} d={`M${x} ${top}V${bottom}`} strokeWidth="2" />
    })
}

const levels = [
    { y: 578.5, value: "915", name: "03-ROOF" },
    { y: 778.5, value: "615", name: "02-FLOOR_PLAN_1" },
    { y: 978.5, value: "315", name: "01-GROUND_FLOOR_PLAN", solid: true },
    { y: 1178.5, value: "15", name: "00-BASEMENT_FLOOR_PLAN", to: 901 },
]

function Elevation() {
    const siding = range(29).map((k) => snap(591.7 + k * 6.667))
    return (
        <Drawing viewBox="306 193 1930 1156" fill="none" stroke="#000" shapeRendering="crispEdges" role="img" aria-label="South elevation">
            <path d="M400.500 1183L434 1181 498 1190 672 1211 880 1233 908 1236 937 1239.500H1264L1473 1238 1556 1236.500 1761 1236 1779 1234 1860 1224 2040 1188 2150.500 1167V1245.500H400.500z" fill="#bfbfbf" />
            <path d="M400.500 223.500h1750v1022H400.500z" />

            {/* terrain and storey lines */}
            <path d="M400.500 978.500h1750M400.500 988.500h1750M1775.500 989.500L2150.500 1014.500" />
            <path d="M400.500 1055.500H907.500M400.500 1122.500H907.500M490 1188.500H907.500M1774.500 1055.500H2150.500M1774.500 1122.500H2150.500M1774.500 1188.500H2040" />

            {/* upper block */}
            <path d="M805.500 788.500V562.500H1570.500V645.500H1541.500V725.500H1570.500V738.500" />
            <path d="M805.500 578.500H1570.500M805.500 588.500H1570.500M833.500 562.500V788.500M833.500 612.500H1440.500V588.500M1442.500 562.500V712.500" />
            <path d="M805.500 778.500H1442.500V722.500M1440.500 722.500V778.500M805.500 788.500H905.500M921.500 788.500H1426.500M921.500 812.500H1426.500" />
            <path d="M905.500 612.500V718.500M905.500 778.500V978.500M921.500 778.500V978.500M1427.500 612.500V778.500M1426.500 778.500V978.500" />
            <path d="M1541.500 645.500h22v3M1562.500 649.500v72M1541.500 725.500h22v-3" />
            <path d="M1541.500 649h22M1541.500 722h22" strokeWidth="2" />
            {siding.map((y) => <path key={y} d={`M805.500 ${y}H833.500`} />)}
            <g stroke="#666">
                {siding.filter((y) => y < 732).map((y) => (
                    <path key={y} d={`M${Math.max(1443, 1443 + (y - 712) * 5.03)} ${y}H${y < 645 || y > 727 ? 1570 : 1541}`} />
                ))}
            </g>
            {range(24).map((k) => <path key={k} d={`M${snap(1266.5 + k * 6.7)} 612.500V778.500`} />)}

            {/* lean-to roof */}
            <path d="M1440.500 722.500V712.500L1787.500 781.500V791.500L1440.500 722.500M1775.500 789V978.500" />

            <CasementWindow x={953.5} y={623.5} soft />
            <CasementWindow x={953.5} y={823.5} />
            <CasementWindow x={953.5} y={1023.5} />
            <CasementWindow x={1534.5} y={823.5} />
            <CasementWindow x={1488.5} y={1023.5} />
            <SlidingDoor y={625.5} />
            <SlidingDoor y={825.5} />
            <SlidingDoor y={1025.5} />

            {/* railings */}
            <path d="M835.500 718.500H1426.500V722.500H835.500z" fill="#fff" />
            <path d="M921.500 918.500H1426.500V922.500H921.500z" fill="#fff" />
            <Balusters from={837} count={53} top={723} bottom={778} post={1} />
            <Balusters from={932} count={44} top={923} bottom={978} post={2} />

            {/* basement */}
            <path d="M907.500 978.500V1232.500M1774.500 978.500V1231.500M907.500 1012.500H1774.500M907.500 1184.500H1774.500M907.500 1211.500H1774.500" />
            <path d="M907.500 1178.500H1266.500V1184.500M1133.500 1178.500V1182.500H1266.500M1440.500 1184.500V1178.500H1774.500" />
            <path d="M907.500 1232.500L934 1235.500H1345V1234.500H1493V1233.500H1573V1232.500H1767L1774.500 1231" />
            <path d="M1667.500 1178.500V1018.500H1727.500V1178.500M1672.500 1023.500H1723.500V1177H1672.500zM1672.500 1175.500H1723.500M1667.500 1018.500l5 5M1727.500 1018.500l-4 5" />
            <g strokeDasharray="11 10" stroke="#101028">
                <path d="M1698 1024L1673 1176" />
                <path d="M1698 1024L1723 1176" />
                <path d="M1723 1024L1674 1098" />
                <path d="M1723 1176L1674 1098" />
            </g>

            {/* level marks */}
            {levels.map(({ y, value, name, solid, to = 805 }) => (
                <g key={name}>
                    {!solid && <path d={`M671.500 ${y}H${to}`} strokeDasharray="36 14 24 18 44 12 24 18" />}
                    <path d={`M605 ${y - 16}H671.500M671.500 ${y - 33}V${y}`} stroke="#38518c" />
                    <path d={`M671.500 ${y - 15}h16l-16 15z`} fill="#0b3fae" stroke="#0b3fae" />
                    <g fill="#222" stroke="none" fontFamily="Liberation Sans, Arial, sans-serif" fontSize="14" textAnchor="end">
                        <text x="664" y={y - 20}>{value}</text>
                        <text x="664" y={y - 3}>{name}</text>
                    </g>
                </g>
            ))}
        </Drawing>
    )
}

/* ---------- parts ---------- */
function QuickAccessBar() {
    return (
        <QuickAccess>
            {quickTools.map((tool, i) =>
                tool.sep ? <Separator key={i} /> : (
                    <ToolSlot key={i} $w={tool.w} $active={tool.active} $dim={tool.dim} aria-label={tool.label}>
                        {tool.caret ? <Caret /> : <Icon>{small[tool.icon]}</Icon>}
                    </ToolSlot>
                )
            )}
        </QuickAccess>
    )
}

function RibbonPanel({ title, tools, left, right, more, open }) {
    return (
        <Panel $open={open}>
            <PanelTools $left={left} $right={right}>
                {tools.map(([icon, label, width, caret, disabled]) => (
                    <RibbonButton key={label} $w={width} disabled={disabled}>
                        <Icon size={32} box={32}>{large[icon]}</Icon>
                        <ButtonLabel>{label}</ButtonLabel>
                        {caret === "down" && <Caret />}
                        {caret === "side" && <SideCaret />}
                    </RibbonButton>
                ))}
            </PanelTools>
            <PanelLabel>{title}{more && <Caret $size={4} />}</PanelLabel>
        </Panel>
    )
}

function PropertyValue({ id, value, kind }) {
    if (kind === "button") return <ValueButton id={id}>{value}</ValueButton>
    if (kind === "check") return <CheckBox id={id} type="checkbox" defaultChecked={value} />
    return <ValueInput id={id} type="text" defaultValue={value} disabled={kind === "muted"} $focus={kind === "focus"} />
}

function PropertiesPanel() {
    return (
        <Sidebar>
            <PanelTitle $right={5}>Properties<button aria-label="Close properties"><Cross /></button></PanelTitle>
            <TypeBox>
                <TypePreview>
                    <Icon size={32} box={32}>
                        <path d="M9 14h14v15H9z" fill="#e6e8ed" />
                        <path d="M16 3l14 15H2z" fill="#3a3f4b" stroke="none" />
                        <path d="M9 15h14v14H9z" fill="#e6e8ed" />
                    </Icon>
                </TypePreview>
                <TypeName>Elevation<br />Building Elevation</TypeName>
                <Caret $size={4} />
            </TypeBox>
            <TypeRow>
                <SelectWrap $w={217} $h={22}>
                    <Select aria-label="Element"><option>Elevation: SOUTH</option></Select>
                    <Chevron />
                </SelectWrap>
                <EditType><Icon>{small.editType}</Icon>Edit Type</EditType>
            </TypeRow>
            <GridScroll>
                <PropertyTable>
                    <colgroup><col width="146" /><col width="143" /><col width="12" /></colgroup>
                    {properties.map(({ group, rows }) => (
                        <tbody key={group}>
                            <tr>
                                <GroupCell colSpan={3}>
                                    <GroupHead>{group}<Icon size={8} box={8}><path d="M1 4l3-3 3 3M1 8l3-3 3 3" stroke="#111" strokeWidth="1.500" /></Icon></GroupHead>
                                </GroupCell>
                            </tr>
                            {rows.map(([name, value, kind]) => {
                                const id = name.replace(/\W+/g, "-").toLowerCase()
                                return (
                                    <tr key={name}>
                                        <NameCell $muted={kind === "muted"}><label htmlFor={id}>{name}</label></NameCell>
                                        <ValueCell><PropertyValue id={id} value={value} kind={kind} /></ValueCell>
                                        <ValueCell />
                                    </tr>
                                )
                            })}
                        </tbody>
                    ))}
                </PropertyTable>
            </GridScroll>
            <SidebarFooter>
                <HelpLink href="#help">Properties help</HelpLink>
                <ApplyButton disabled>Apply</ApplyButton>
            </SidebarFooter>
        </Sidebar>
    )
}

const viewIcons = [
    <><path d="M1 3h16v12H1z" fill="#fff" /><path d="M1 6h16M1 9h16M1 12h16M4 3v12M7 3v12M10 3v12M13 3v12" strokeWidth=".8" stroke="#555" /></>,
    <><path d="M2 8l4-4h10v7l-4 4H2zM2 8h10v7M12 8l4-4" fill="#fff" /></>,
    <><circle cx="8" cy="8" r="4" fill="#fbe29a" stroke="#c98d12" strokeWidth="2" /><path d="M8 1v2M1 8h2M3 3l1 1" stroke="#c98d12" /><path d="M10 10l6 6M16 10l-6 6" stroke="#c22525" strokeWidth="2" /></>,
    <><circle cx="8" cy="7" r="4.500" fill="#cfe4f5" stroke="#3a6ea5" /><path d="M3 15h7" stroke="#3a6ea5" strokeWidth="2" /><path d="M10 10l6 6M16 10l-6 6" stroke="#c22525" strokeWidth="2" /></>,
    <><path d="M5 15V5h12M1 12h12V8" stroke="#1f5f94" strokeWidth="2" /><path d="M8 9l4-2" stroke="#c22525" /></>,
    <><path d="M5 15V5h8M1 12h8V8" stroke="#1f5f94" strokeWidth="2" /><path d="M12 4h4v6l-1 5h-2l-1-5z" fill="#fbd27a" stroke="#b07a1a" /></>,
    <><path d="M1 5l4 5M10 4l6-1v4" /><circle cx="6" cy="11" r="3" fill="#fff" /><circle cx="13" cy="9" r="3" fill="#fff" /></>,
    <><circle cx="9" cy="7" r="3" fill="#cfe4f5" stroke="#2f6da3" /><path d="M8 10h2v5H8z" fill="#2f6da3" stroke="none" /></>,
    <><path d="M3 3h11v11H3z" strokeDasharray="2 1" strokeWidth="2" /><circle cx="12" cy="12" r="4" fill="#eee" stroke="#222" /><path d="M10 12h4" /></>,
    <><path d="M1 4h15M1 1v15M16 1v6M1 14h7" strokeDasharray="3 1" /><path d="M10 10h7v6h-7z" fill="#888" /><path d="M11 10V8h5v2" /></>,
]

function ProjectBrowser() {
    return (
        <Browser>
            <PanelTitle $right={2}>Project Browser - villa_3_storey_house_revit_project<button aria-label="Close project browser"><Cross /></button></PanelTitle>
            <Tree>
                {tree.map(({ depth, label, box, icon, pipes = [], last }) => (
                    <TreeRow key={label + depth}>
                        {pipes.map((on, i) => <Guide key={i} $down={on ? "100%" : "0"} />)}
                        <Guide $w={depth ? 24 : 20} $down={last ? "9px" : "100%"} $across>
                            {box && (
                                <Expander aria-label={`Toggle ${label}`}>
                                    <Icon size={7} box={7}><path d={box === "+" ? "M1 3.500h5M3.500 1v5" : "M1 3.500h5"} strokeWidth="1" /></Icon>
                                </Expander>
                            )}
                        </Guide>
                        {icon && <Icon size={17}>{treeIcons[icon]}</Icon>}
                        <TreeLabel $root={depth === 0} $active={label === "SOUTH"}>{label}</TreeLabel>
                    </TreeRow>
                ))}
            </Tree>
        </Browser>
    )
}

const PickArrow = () => <path d="M9 7v9l2-2 2 4 1-1-1-4h3z" fill="#fff" stroke="#333" strokeWidth=".8" />
const RedX = () => <path d="M11 1l5 5M16 1l-5 5" stroke="#c22525" strokeWidth="2" />
const selectIcons = [
    <><rect x="1" y="2" width="8" height="6" rx="3" fill="#fbe29a" stroke="#c98d12" strokeWidth="2" /><rect x="8" y="2" width="8" height="6" rx="3" stroke="#c98d12" strokeWidth="2" /><PickArrow /></>,
    <><path d="M1 15l5-9h6l-4 9zM3 12h6" fill="#cfe4f5" stroke="#1f5f94" /><RedX /><PickArrow /></>,
    <><path d="M4 2h8l-1 6h2v3H2V8h3zM7 11v6" fill="#f2a65a" stroke="#9a5a1a" /><PickArrow /></>,
    <><path d="M3 5l5-3v12l-5 3z" fill="#9dcff0" stroke="#1f5f94" /><RedX /><PickArrow /></>,
    <><path d="M6 2v10M1 7h10M4 4l2-2 2 2M4 10l2 2 2-2" stroke="#222" /><RedX /><PickArrow /></>,
    <circle cx="9" cy="9" r="6" stroke="#9a9a9a" strokeWidth="3" strokeDasharray="3 2" />,
]

/* fills shared by the ribbon icons */
const SharedFills = () => (
    <Icon size={0} box={1}>
        <defs>
            <linearGradient id="metal" x1="0" y1="0" x2="1" y2="1">
                <stop offset="0" stopColor="#ffffff" />
                <stop offset="1" stopColor="#b5b9c1" />
            </linearGradient>
            <pattern id="hatch" width="4" height="4" patternUnits="userSpaceOnUse">
                <path d="M0 0h4v4H0z" fill="#c3c6cc" stroke="none" />
                <path d="M0 4l4-4" stroke="#6b707a" />
            </pattern>
        </defs>
    </Icon>
)

export default function App() {
    return (
        <Page>
            <GlobalStyle />
            <SharedFills />
            <TitleBar>
                <QuickAccessBar />
                <WindowTitle>Autodesk Revit 2022 - villa_3_storey_house_revit_project - Elevation: SOUTH</WindowTitle>
                <SearchBox type="search" aria-label="Search" />
                <WindowTools>
                    <ToolSlot $w={27} aria-label="App store"><Icon>{small.cart}</Icon></ToolSlot>
                    <ToolSlot $w={6} aria-hidden="true"><Separator /></ToolSlot>
                    <ToolSlot $w={30} aria-label="Help"><Icon>{small.help}</Icon></ToolSlot>
                    <ToolSlot $w={6} aria-label="Help menu"><Caret /></ToolSlot>
                    <ToolSlot $w={50} aria-hidden="true" />
                    <ToolSlot $w={36} aria-label="Minimize"><Icon>{small.minimize}</Icon></ToolSlot>
                    <ToolSlot $w={16} aria-label="Restore"><Icon>{small.restore}</Icon></ToolSlot>
                    <ToolSlot $w={28} aria-label="Close"><Cross size={12} /></ToolSlot>
                </WindowTools>
            </TitleBar>
            <RibbonTabs>
                <FileTab>File</FileTab>
                {ribbonTabs.map((tab, i) => <RibbonTab key={tab} $active={i === 0}>{tab}</RibbonTab>)}
                <MinimizeRibbon aria-label="Minimize ribbon">
                    <Icon size={16} box={16}><rect x="1" y="4" width="14" height="9" rx="2" fill="#fff" /><path d="M5 10l3-3 3 3z" fill="#222" stroke="none" /></Icon>
                    <Caret $color="#111" />
                </MinimizeRibbon>
            </RibbonTabs>
            <Ribbon>
                <Panel>
                    <PanelTools>
                        <ModifyButton>
                            <Icon size={32} box={32}>{large.modify}</Icon>
                            <ButtonLabel>Modify</ButtonLabel>
                        </ModifyButton>
                    </PanelTools>
                    <PanelLabel>Select<Caret $size={4} /></PanelLabel>
                </Panel>
                {panels.map((panel) => <RibbonPanel key={panel.title} {...panel} />)}
            </Ribbon>
            <OptionsBar />
            <Workspace>
                <PropertiesPanel />
                <ViewArea>
                    <DocTabs>
                        {docTabs.map(([icon, label]) => {
                            const active = label === "SOUTH"
                            return (
                                <DocTab key={label} $active={active}>
                                    <Icon size={16}>{small[icon]}</Icon>
                                    {label}
                                    {active && <TabClose><Cross /></TabClose>}
                                </DocTab>
                            )
                        })}
                        <TabMenu aria-label="Open views"><Icon>{small.custom}</Icon></TabMenu>
                    </DocTabs>
                    <CanvasRow>
                        <Elevation />
                        <ScrollTrack>
                            <Icon size={16} box={16}><path d="M7 0v16" stroke="#888" strokeWidth="2" /></Icon>
                        </ScrollTrack>
                        <NavBar>
                            <NavCorner aria-label="Close navigation bar"><Icon size={8} box={10}><circle cx="5" cy="5" r="4.500" stroke="#aaa" /><path d="M3 3l4 4M7 3l-4 4" stroke="#aaa" /></Icon></NavCorner>
                            <NavTool $top={10} aria-label="Steering wheel">
                                <Icon size={24} box={24}>
                                    <path d="M11 2h8v9a8.500 8.500 0 1 1-8-9z" fill="#e9ebef" stroke="#a5a9b2" />
                                    <circle cx="11" cy="11" r="5" fill="#f5f5f5" stroke="#a5a9b2" />
                                    <text x="12" y="24" fontSize="10" fontWeight="600" fill="#7fa8d4" stroke="none">2D</text>
                                </Icon>
                                <Caret $color="#999" />
                            </NavTool>
                            <NavRule />
                            <NavTool $top={8} aria-label="Zoom">
                                <Icon size={18}><path d="M2 2h11v11H2z" fill="#a9cf9a" stroke="#8fb582" /><circle cx="12" cy="11" r="3.500" fill="#f5f5f5" stroke="#999" /><path d="M14 14l3 3" stroke="#999" strokeWidth="2" /></Icon>
                                <Caret $color="#999" />
                            </NavTool>
                            <NavCorner $top={10} aria-label="Navigation bar options"><Icon size={8} box={10}><circle cx="5" cy="5" r="4.500" stroke="#aaa" /><path d="M3 5h4" stroke="#aaa" /></Icon></NavCorner>
                        </NavBar>
                    </CanvasRow>
                    <ViewControls>
                        <ScaleLabel>1 : 50</ScaleLabel>
                        {viewIcons.map((icon, i) => <ControlSlot key={i} aria-label={`View control ${i + 1}`}><Icon size={17}>{icon}</Icon></ControlSlot>)}
                        <HorizontalThumb />
                        <Icon size={10} box={10}><path d="M8 0v10M4 4v6M0 8v2" stroke="#b5b5b5" strokeWidth="2" strokeDasharray="2 2" /></Icon>
                    </ViewControls>
                </ViewArea>
                <ProjectBrowser />
            </Workspace>
            <StatusBar>
                <Hint>Click to select, TAB for alternates, CTRL adds, SHIFT unselects.</Hint>
                <StatusGroup $after={24}>
                    <Icon><path d="M2 8h8v8H2z" fill="#9dcff0" stroke="#1f5f94" /><path d="M4 8V5q2-4 6-2l3 2" stroke="#2e8b3d" strokeWidth="2" /><path d="M12 9h4v7h-4z" fill="#fff" /></Icon>
                    <SelectWrap $w={204} $h={18}><Select aria-label="Active workset" disabled /><Chevron /></SelectWrap>
                    <Counter>
                        <Icon><path d="M5 2h9l-2 5-5 1v8H3l2-9z" fill="#b5b5b5" stroke="#888" /><path d="M13 2l-6 14" stroke="#eee" /></Icon>
                        :0
                    </Counter>
                </StatusGroup>
                <StatusGroup $after={224}>
                    <Icon><path d="M3 2h12v14H3z" fill="#fff" /><path d="M3 3h12" strokeWidth="2" /><path d="M6 7h2M10 7h3M6 10h2M10 10h3M6 13h2M10 13h3" /></Icon>
                    <Icon><path d="M3 2h12v14H3z" fill="#a5a5a5" stroke="#999" /><path d="M6 12h4V6" stroke="#ddd" /></Icon>
                    <SelectWrap $w={204} $h={18}><Select aria-label="Design option" disabled $muted><option>Main Model</option></Select><Chevron /></SelectWrap>
                </StatusGroup>
                <StatusGroup>
                    {selectIcons.map((icon, i) => <Icon key={i}>{icon}</Icon>)}
                    <Counter>
                        <Icon><path d="M1 2h16l-6 7v7l-4-2V9z" fill="#b5bfd0" stroke="#59606c" /></Icon>
                        :0
                    </Counter>
                </StatusGroup>
            </StatusBar>
        </Page>
    )
}
